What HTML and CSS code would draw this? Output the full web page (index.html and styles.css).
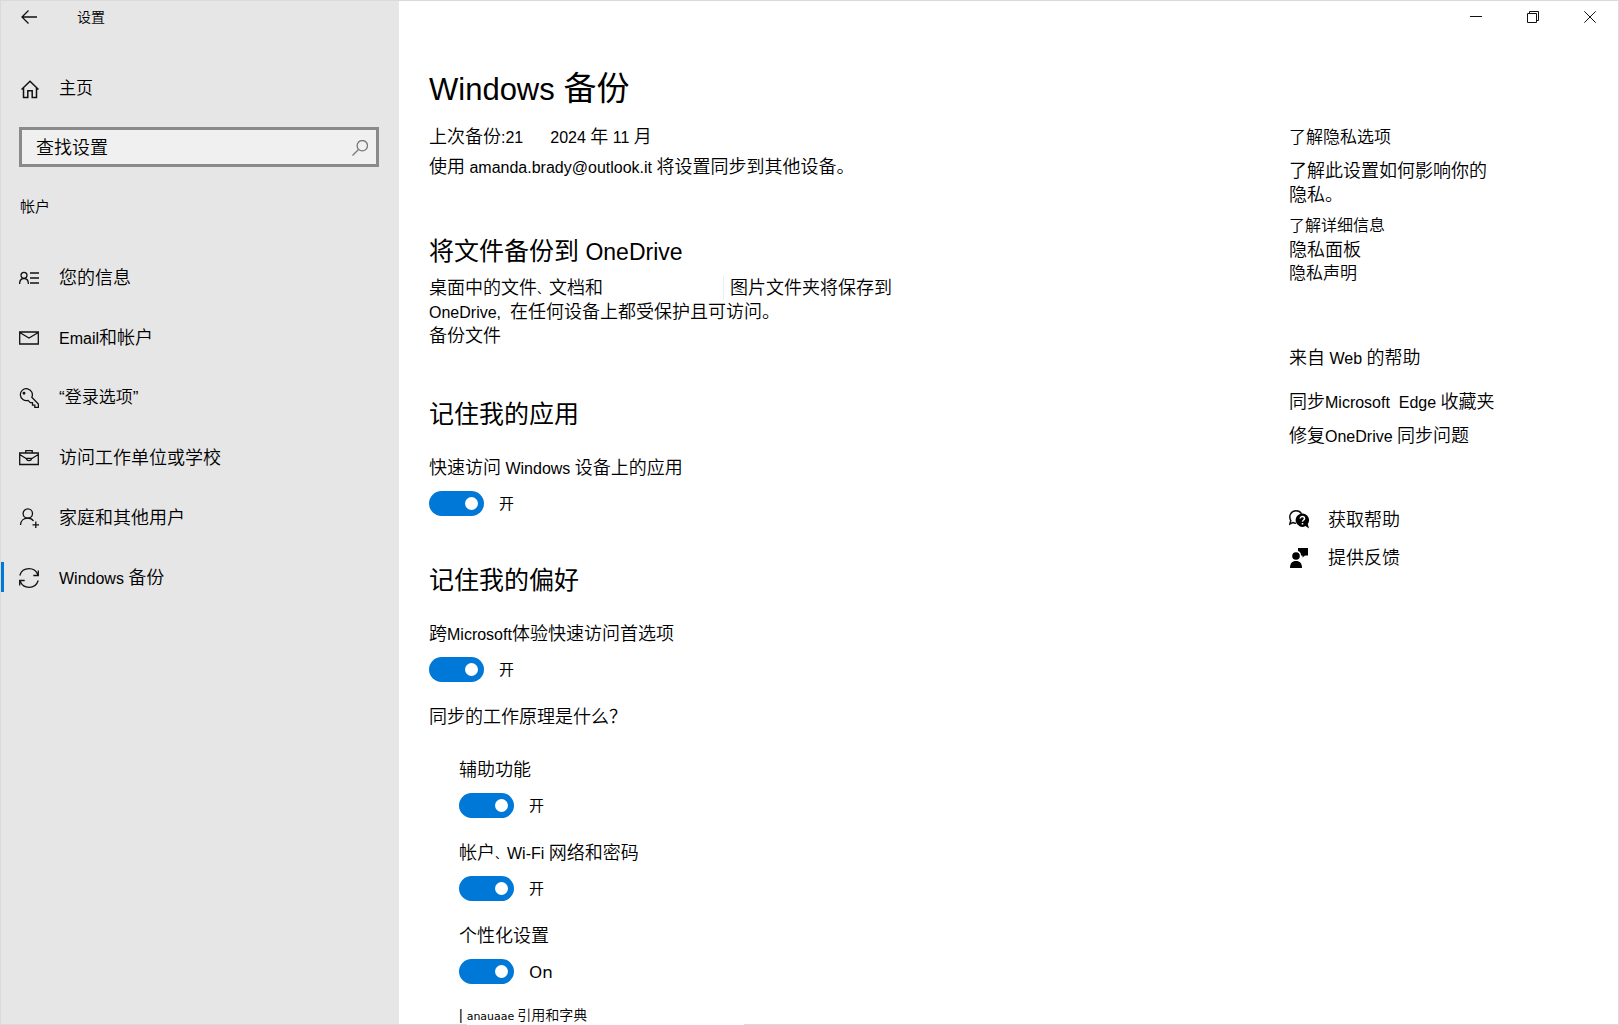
FILE: index.html
```html
<!DOCTYPE html>
<html lang="zh-CN">
<head>
<meta charset="utf-8">
<title>设置</title>
<meta name="viewport" content="width=device-width, initial-scale=1">
<link rel="stylesheet" href="styles.css">
</head>
<body>
<div class="window">
  <aside class="sidebar">
    <header class="sidebar-title">
      <button class="back" type="button" aria-label="返回">
        <svg width="16" height="14" viewBox="0 0 16 14"><path d="M7.500 .5 1 7l6.500 6.500M1 7h15"/></svg>
      </button>
      <span>设置</span>
    </header>
    <a class="home" href="#">
      <svg width="18" height="19" viewBox="0 0 18 19"><path d="M.5 9.500 9 1.300l8.500 8.200M2.500 8v9.500h4.300v-6.800h4.400v6.800h4.300V8" stroke-width="1.500"/></svg>
      <span>主页</span>
    </a>
    <div class="search">
      <input type="search" placeholder="查找设置" aria-label="查找设置">
      <svg width="16" height="16" viewBox="0 0 16 16"><circle cx="10.300" cy="5.700" r="5.200"/><path d="M6.500 9.500.5 15.500"/></svg>
    </div>
    <h2 class="section">帐户</h2>
    <nav class="nav">
      <a href="#"><svg width="20" height="20" viewBox="0 0 20 20"><circle cx="5" cy="7.300" r="3"/><path d="M.6 16c0-3.400 1.800-5.500 4.400-5.500S9.400 12.600 9.400 16M11 5h9M11 10h9M11 15h9"/></svg><span>您的信息</span></a>
      <a href="#"><svg width="20" height="20" viewBox="0 0 20 20"><path d="M.7 4h18.600v12H.7zM.7 4.500 10 10l9.300-5.500"/></svg><span><span class="latin">Email</span>和帐户</span></a>
      <a class="medium" href="#"><svg width="20" height="20" viewBox="0 0 20 20"><path d="M12.800 9.200 19.400 16v3.400h-3.600v-2.300h-2.300v-2.400h-2.200l-2.200-2.300A6 6 0 1 1 12.800 9.200z"/><circle cx="5" cy="5.200" r=".8"/></svg><span>“登录选项”</span></a>
      <a href="#"><svg width="20" height="20" viewBox="0 0 20 20"><path d="M.7 5h18.600v11.500H.7zM6.800 5V2.600h6.400V5M.7 6.500l6.800 4.300M19.300 6.500l-6.800 4.300M7.500 10.300h5c0 3-5 3-5 0z"/></svg><span>访问工作单位或学校</span></a>
      <a href="#"><svg width="20" height="20" viewBox="0 0 20 20"><circle cx="8.800" cy="5.500" r="4.700"/><path d="M1.500 17c.2-4.200 3.200-6.800 7.300-6.800 2.500 0 4.500 1 5.700 2.800M16.800 13.500v6.500M13.500 16.800H20"/></svg><span>家庭和其他用户</span></a>
      <a class="current" href="#" aria-current="page"><svg width="20" height="20" viewBox="0 0 20 20"><path d="M.8 7.500C2 3.400 5.600.7 10 .7c4 0 7.300 2.300 8.700 5.800M19.300 2.500v5h-5M19.200 12.500c-1.200 4.100-4.800 6.800-9.200 6.800-4 0-7.300-2.300-8.700-5.800M.7 17.500v-5h5"/></svg><span><span class="latin">Windows </span>备份</span></a>
    </nav>
  </aside>

  <main class="main">
    <div class="controls">
      <button type="button" aria-label="最小化"><svg width="12" height="12" viewBox="0 0 12 12"><path d="M0 5.500h12"/></svg></button>
      <button type="button" aria-label="还原"><svg width="12" height="12" viewBox="0 0 12 12"><path d="M.5 2.500h9v9h-9zM2.500 2.500v-2h9v9h-2"/></svg></button>
      <button type="button" aria-label="关闭"><svg width="12" height="12" viewBox="0 0 12 12"><path d="M.3.3l11.400 11.400M11.700.3.3 11.700"/></svg></button>
    </div>
    <div class="columns">
      <div class="content">
        <h1><span class="latin">Windows </span>备份</h1>
        <p class="status"><span>上次备份<span class="latin">:21</span></span><span><span class="latin">2024 </span>年<span class="latin"> 11 </span>月</span></p>
        <p class="account">使用<span class="latin"> amanda.brady@outlook.it </span>将设置同步到其他设备。</p>

        <section>
          <h2>将文件备份到<span class="latin"> OneDrive</span></h2>
          <div class="text">
            <p class="folders"><span>桌面中的文件<span class="comma">、</span>文档和</span><span class="after-gap">图片文件夹将保存到</span></p>
            <p><span class="latin">OneDrive,&nbsp; </span>在任何设备上都受保护且可访问。</p>
            <a href="#">备份文件</a>
          </div>
        </section>

        <section>
          <h2>记住我的应用</h2>
          <div class="setting">
            <label for="apps">快速访问<span class="latin"> Windows </span>设备上的应用</label>
            <div class="switch"><input type="checkbox" role="switch" id="apps" checked><span>开</span></div>
          </div>
        </section>

        <section>
          <h2>记住我的偏好</h2>
          <div class="setting">
            <label for="prefs">跨<span class="latin">Microsoft</span>体验快速访问首选项</label>
            <div class="switch"><input type="checkbox" role="switch" id="prefs" checked><span>开</span></div>
          </div>
          <a class="how" href="#">同步的工作原理是什么？</a>
          <div class="nested">
            <div class="setting">
              <label for="access">辅助功能</label>
              <div class="switch"><input type="checkbox" role="switch" id="access" checked><span>开</span></div>
            </div>
            <div class="setting">
              <label for="wifi">帐户<span class="comma">、</span><span class="latin">Wi-Fi </span>网络和密码</label>
              <div class="switch"><input type="checkbox" role="switch" id="wifi" checked><span>开</span></div>
            </div>
            <div class="setting">
              <label for="personal">个性化设置</label>
              <div class="switch"><input type="checkbox" role="switch" id="personal" checked><span class="on">On</span></div>
            </div>
            <p class="cut"><span class="bar">|</span><span class="rest"><span class="tiny">anauaae</span>引用和字典</span></p>
          </div>
        </section>
      </div>

      <aside class="related">
        <h3>了解隐私选项</h3>
        <p class="about">了解此设置如何影响你的隐私。</p>
        <div class="links">
          <a class="small" href="#">了解详细信息</a>
          <a href="#">隐私面板</a>
          <a class="medium" href="#">隐私声明</a>
        </div>
        <h4>来自<span class="latin"> Web </span>的帮助</h4>
        <div class="web-links">
          <a href="#">同步<span class="latin">Microsoft&nbsp; Edge </span>收藏夹</a>
          <a href="#">修复<span class="latin">OneDrive </span>同步问题</a>
        </div>
        <div class="support">
          <a href="#"><svg width="20" height="20" viewBox="0 0 20 20"><path class="line" d="M7 13.200c-1.300.1-2.200-.2-3.100-.7L.8 14l1-3.300C-.8 6 2 .8 7 .8c2.600 0 4.600 1.200 5.600 3"/><path class="solid" d="M13.300 3.500a6.700 6.700 0 1 0 3.200 12.600L20 18.500l-1.200-4.500A6.700 6.700 0 0 0 13.300 3.500z"/><path class="mark" d="M11.300 8.500c0-2.700 4.200-2.500 4.200-.1 0 1.700-2 1.500-2 3.400M13.500 13.100v1.500"/></svg><span>获取帮助</span></a>
          <a href="#"><svg width="20" height="20" viewBox="0 0 20 20"><circle class="solid" cx="7" cy="8" r="3.800"/><path class="solid" d="M1 20c0-4.500 2-7 6-7s6 2.500 6 7zM9 0h10v7.500h-3L13.500 9.500V7.500H12C12 5 10.800 3.600 9 3z"/></svg><span>提供反馈</span></a>
        </div>
      </aside>
    </div>
  </main>
</div>
</body>
</html>
```
FILE: styles.css
```css
* { box-sizing: border-box; }

body {
  margin: 0;
  background: #fff;
  color: #000;
  font-family: "Liberation Sans", "Noto Sans CJK SC", sans-serif;
  font-size: 18px;
  font-weight: 350;
  line-height: 24px;
}

h1, h2, h3, h4, p { margin: 0; font-weight: inherit; }
a { color: inherit; text-decoration: none; }
button { border: 0; padding: 0; background: none; color: inherit; }
svg { fill: none; stroke: #111; flex: none; }
.latin { font-size: 16px; line-height: 1; }
.comma { font-size: 12px; line-height: 1; }

.window {
  position: relative;
  display: flex;
  height: 100vh;
  overflow: hidden;
  padding: 1px;
}
/* window frame */
.window::after {
  content: "";
  position: absolute;
  inset: 0;
  border: 1px solid #dadada;
  pointer-events: none;
}

/* sidebar */
.sidebar {
  flex: none;
  width: 398px;
  background: #e6e6e6;
}
.sidebar svg { stroke-width: 1.3; }
.sidebar-title {
  display: flex;
  align-items: center;
  gap: 40px;
  height: 32px;
  padding-left: 20px;
  font-size: 14px;
}
.back { display: flex; }
.home {
  display: flex;
  align-items: center;
  gap: 20px;
  height: 40px;
  margin-top: 36px;
  padding-left: 20px;
  font-size: 17px;
}
.search {
  display: flex;
  align-items: center;
  height: 40px;
  margin: 18px 20px 0 18px;
  padding: 1px 8px 0 14px;
  border: 3px solid #8a8a8a;
  background: #f0f0f0;
}
.search input {
  flex: 1;
  min-width: 0;
  border: 0;
  padding: 0;
  background: none;
  outline: 0;
  font: inherit;
}
.search input::placeholder { color: #000; opacity: 1; }
.search svg { stroke: #777; }
.section {
  margin-top: 25px;
  padding-left: 19px;
  font-size: 15px;
  line-height: 30px;
}
.nav { margin-top: 26px; }
.nav a {
  display: flex;
  align-items: center;
  gap: 20px;
  height: 60px;
  padding-left: 18px;
}
.nav .current { position: relative; }
.nav .current::before {
  content: "";
  position: absolute;
  left: 0;
  top: 14px;
  width: 3px;
  height: 30px;
  background: #0078d7;
}

/* main area */
.main { flex: 1; min-width: 0; }
.controls { display: flex; justify-content: flex-end; height: 32px; }
.controls button {
  display: grid;
  place-items: center;
  width: 57px;
}
.columns { display: grid; grid-template-columns: minmax(0, 1fr) 329px; }
.content { padding: 36px 0 0 30px; }
h1 { font-size: 33px; line-height: 40px; font-weight: 400; }
h1 .latin { font-size: 31px; }
.status {
  display: flex;
  gap: 27px;
  margin-top: 13px;
  line-height: 30px;
}
.account { line-height: 30px; }
section { margin-top: 53px; }
section h2 { font-size: 25px; line-height: 32px; font-weight: 400; }
section h2 .latin { font-size: 23px; }
.text { margin-top: 9px; padding-bottom: 2px; }
.folders { display: flex; gap: 120px; }
.after-gap { padding-left: 6px; border-left: 1px solid #eee; }
section h2 + .setting { margin-top: 26px; }
.setting label { display: block; }
.switch {
  display: flex;
  align-items: center;
  gap: 15px;
  height: 25px;
  margin-top: 11px;
  font-size: 15px;
  font-weight: 400;
}
.switch input {
  appearance: none;
  display: flex;
  align-items: center;
  justify-content: flex-end;
  width: 55px;
  height: 25px;
  margin: 0;
  padding-right: 6px;
  border-radius: 13px;
  background: #0078d7;
}
.switch input::before {
  content: "";
  width: 13px;
  height: 13px;
  border-radius: 50%;
  background: #fff;
}
.on { font-family: "Noto Sans", sans-serif; font-size: 17px; }
section + section { margin-top: 48px; }
.how { display: block; margin-top: 23px; }
.nested {
  display: grid;
  gap: 23px;
  margin-top: 29px;
  padding-left: 30px;
}
.cut {
  display: flex;
  gap: 4px;
  margin-top: -4px;
  font-size: 14px;
}
.cut .rest {
  position: relative;
  z-index: 1;
  width: 277px;
  background: #fff;
}
.tiny {
  margin-right: 3px;
  font-family: "DejaVu Sans", sans-serif;
  font-size: 11px;
  font-weight: 400;
  line-height: 1;
}

/* related links */
.related { padding-top: 93px; }
h3 { font-size: 17px; line-height: 24px; }
h4 { margin-top: 60px; font-size: 18px; }
.about { width: 204px; margin-top: 9px; }
.links, .web-links, .support { display: grid; justify-items: start; }
.links { margin-top: 7px; }
.small { font-size: 16px; }
.medium { font-size: 17px; }
.web-links { gap: 10px; margin-top: 20px; }
.support { gap: 14px; margin-top: 60px; }
.support a { display: flex; align-items: center; gap: 19px; }
.support .line { stroke-width: 1.500; }
.support .solid { fill: #000; stroke: none; }
.support .mark { stroke: #fff; stroke-width: 1.500; }
```
